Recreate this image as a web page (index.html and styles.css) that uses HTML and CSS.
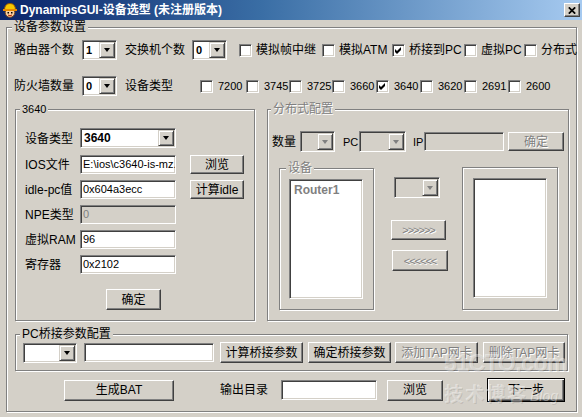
FILE: index.html
```html
<!DOCTYPE html>
<html lang="zh-CN">
<head>
<meta charset="utf-8">
<title>DynamipsGUI-设备选型</title>
<link rel="stylesheet" href="styles.css">
</head>
<body>
<div class="titlebar">
  <svg class="appicon" viewBox="0 0 16 16" width="16" height="16">
    <circle cx="8" cy="10.5" r="4.8" fill="#f7cfa0" stroke="#7a4a20" stroke-width="1"/>
    <path d="M2.5 8 Q2.5 1.5 8 1.5 Q13.5 1.5 13.5 8 Z" fill="#f7c600" stroke="#9a5a00" stroke-width="1"/>
    <rect x="1" y="7" width="14" height="2" fill="#e88a00"/>
    <rect x="5.5" y="10" width="1.5" height="1.5" fill="#000"/>
    <rect x="9" y="10" width="1.5" height="1.5" fill="#000"/>
    <path d="M6 13 Q8 14.5 10 13" stroke="#b02000" fill="none"/>
  </svg>
  <span class="title">DynamipsGUI-设备选型 (未注册版本)</span>
  <span class="close"><svg viewBox="0 0 8 7" width="8" height="7"><path d="M0.8 0.3 L7.2 6.7 M7.2 0.3 L0.8 6.7" stroke="#000" stroke-width="1.7"/></svg></span>
</div>

<fieldset class="grp main">
  <legend>设备参数设置</legend>

  <div class="row top1">
    <span class="lbl l-a">路由器个数</span>
    <span class="combo c-num"><span class="cv">1</span><span class="dd"></span></span>
    <span class="lbl l-b">交换机个数</span>
    <span class="combo c-num"><span class="cv">0</span><span class="dd"></span></span>
    <span class="chk k1"><span class="cb"></span>模拟帧中继</span>
    <span class="chk k2"><span class="cb"></span>模拟ATM</span>
    <span class="chk k3"><span class="cb"><svg viewBox="0 0 11 11" width="11" height="11"><path d="M2 4 L4 6 L8 2 L8 5 L4 9 L2 7 Z" fill="#000"/></svg></span>桥接到PC</span>
    <span class="chk k4"><span class="cb"></span>虚拟PC</span>
    <span class="chk k5"><span class="cb"></span>分布式</span>
  </div>

  <div class="row top2">
    <span class="lbl l-a">防火墙数量</span>
    <span class="combo c-num"><span class="cv">0</span><span class="dd"></span></span>
    <span class="lbl l-c">设备类型</span>
    <span class="chk t k6"><span class="cb"></span>7200</span>
    <span class="chk t k7"><span class="cb"></span>3745</span>
    <span class="chk t k7"><span class="cb"></span>3725</span>
    <span class="chk t k8"><span class="cb"></span>3660</span>
    <span class="chk t k8"><span class="cb"><svg viewBox="0 0 11 11" width="11" height="11"><path d="M2 4 L4 6 L8 2 L8 5 L4 9 L2 7 Z" fill="#000"/></svg></span>3640</span>
    <span class="chk t k8"><span class="cb"></span>3620</span>
    <span class="chk t k8"><span class="cb"></span>2691</span>
    <span class="chk t k8"><span class="cb"></span>2600</span>
  </div>

  <div class="mid">
    <fieldset class="grp g3640">
      <legend class="en">3640</legend>
      <div class="form">
        <span class="lbl">设备类型</span>
        <span class="combo c-type"><span class="cv">3640</span><span class="dd"></span></span>
        <span></span>
        <span class="lbl">IOS文件</span>
        <span class="edit">E:\ios\c3640-is-mz.</span>
        <button class="btn">浏览</button>
        <span class="lbl">idle-pc值</span>
        <span class="edit">0x604a3ecc</span>
        <button class="btn">计算idle</button>
        <span class="lbl">NPE类型</span>
        <span class="edit off">0</span>
        <span></span>
        <span class="lbl">虚拟RAM</span>
        <span class="edit">96</span>
        <span></span>
        <span class="lbl">寄存器</span>
        <span class="edit">0x2102</span>
        <span></span>
      </div>
      <button class="btn ok">确定</button>
    </fieldset>

    <fieldset class="grp gdist">
      <legend class="dis">分布式配置</legend>
      <div class="row drow1">
        <span class="lbl d-num">数量</span>
        <span class="combo off c-dn"><span class="cv"></span><span class="dd"></span></span>
        <span class="lbl en d-pc">PC</span>
        <span class="combo off c-dpc"><span class="cv"></span><span class="dd"></span></span>
        <span class="lbl en d-ip">IP</span>
        <span class="edit off d-ipin"></span>
        <button class="btn dis d-ok">确定</button>
      </div>
      <div class="row drow2">
        <fieldset class="grp gdev">
          <legend class="dis">设备</legend>
          <div class="list"><b>Router1</b></div>
        </fieldset>
        <div class="midcol">
          <span class="combo off c-mid"><span class="cv"></span><span class="dd"></span></span>
          <button class="btn dis arr1">&gt;&gt;&gt;&gt;&gt;&gt;</button>
          <button class="btn dis arr2">&lt;&lt;&lt;&lt;&lt;&lt;</button>
        </div>
        <div class="etch rbox">
          <div class="list"></div>
        </div>
      </div>
    </fieldset>
  </div>

  <fieldset class="grp gpc">
    <legend>PC桥接参数配置</legend>
    <div class="row pcrow">
      <span class="combo c-pc"><span class="cv"></span><span class="dd"></span></span>
      <span class="edit p-in"></span>
      <button class="btn p-b p-b1">计算桥接参数</button>
      <button class="btn p-b p-b2">确定桥接参数</button>
      <button class="btn dis p-b p-b3">添加TAP网卡</button>
      <button class="btn dis p-b p-b4">删除TAP网卡</button>
    </div>
  </fieldset>

  <div class="row bottom">
    <button class="btn b-bat">生成BAT</button>
    <span class="lbl b-lbl">输出目录</span>
    <span class="edit b-in"></span>
    <button class="btn b-br">浏览</button>
    <button class="btn def b-next">下一步</button>
  </div>
</fieldset>

<div class="wm" aria-hidden="true">
  <span class="wm1">51CTO.com</span>
  <span class="wm2">技术博客<i>Blog</i></span>
</div>
</body>
</html>
```

FILE: styles.css
```css
* { box-sizing: border-box; }
html, body { margin: 0; padding: 0; }
body {
  width: 582px;
  height: 417px;
  overflow: hidden;
  position: relative;
  background: #d4d0c8;
  color: #000;
  font: 12px/14px "Liberation Sans", "Noto Sans CJK SC", sans-serif;
}

/* title bar */
.titlebar {
  height: 20px;
  display: flex;
  align-items: center;
  padding: 0 2px 0 2px;
  background: linear-gradient(90deg, #0a246a 0%, #3a6ea5 45%, #a6caf0 100%);
}
.appicon { flex-shrink: 0; }
.title {
  flex: 1;
  margin-left: 2px;
  color: #fff;
  font-weight: bold;
  white-space: nowrap;
}
.close {
  width: 16px;
  height: 14px;
  display: flex;
  align-items: center;
  justify-content: center;
  background: #d4d0c8;
  border: 1px solid;
  border-color: #fff #404040 #404040 #fff;
  box-shadow: inset -1px -1px #808080;
}

/* group boxes */
.grp {
  margin: 0;
  padding: 0;
  min-width: 0;
  border: 1px solid #808080;
  box-shadow: inset 1px 1px #fff, 1px 1px #fff;
}
.grp > legend {
  padding: 0 2px;
  line-height: 14px;
  background: #d4d0c8;
}
.etch {
  border: 1px solid #808080;
  box-shadow: inset 1px 1px #fff, 1px 1px #fff;
}
.dis, legend.dis {
  color: #808080;
  text-shadow: 1px 1px 0 #fff;
}
.en { font-size: 11px; }

.main {
  margin: 0 5px 0 6px;
  width: 571px;
  padding: 6px 0 9px 7px;
}
.main > legend { margin-left: -2px; }

.row { display: flex; align-items: center; }
.row > * { flex-shrink: 0; }
.lbl { white-space: nowrap; }

/* combo */
.combo {
  display: flex;
  height: 20px;
  padding: 1px;
  background: #fff;
  border: 1px solid;
  border-color: #808080 #fff #fff #808080;
  box-shadow: inset 1px 1px #404040, inset -1px -1px #d4d0c8;
}
.combo .cv {
  flex: 1;
  padding-left: 2px;
  font-weight: bold;
  font-size: 11px;
  line-height: 16px;
  overflow: hidden;
}
.combo .dd {
  width: 16px;
  display: flex;
  align-items: center;
  justify-content: center;
  background: #d4d0c8;
  border: 1px solid;
  border-color: #d4d0c8 #404040 #404040 #d4d0c8;
  box-shadow: inset 1px 1px #fff, inset -1px -1px #808080;
}
.combo .dd::after {
  content: "";
  width: 0;
  height: 0;
  border-left: 3.5px solid transparent;
  border-right: 3.5px solid transparent;
  border-top: 4px solid #000;
}
.combo.off { background: #d4d0c8; }
.combo.off .dd::after { border-top-color: #808080; }

/* checkbox */
.chk { display: flex; align-items: center; gap: 4px; white-space: nowrap; }
.chk.t { gap: 5px; font-size: 11px; }
.cb {
  width: 13px;
  height: 13px;
  flex-shrink: 0;
  display: flex;
  background: #fff;
  border: 1px solid;
  border-color: #808080 #fff #fff #808080;
  box-shadow: inset 1px 1px #404040, inset -1px -1px #d4d0c8;
}

/* edit */
.edit {
  display: block;
  height: 19px;
  padding: 0 1px 0 2px;
  background: #fff;
  border: 1px solid;
  border-color: #808080 #fff #fff #808080;
  box-shadow: inset 1px 1px #404040, inset -1px -1px #d4d0c8;
  font-size: 11px;
  line-height: 17px;
  white-space: nowrap;
  overflow: hidden;
}
.edit.off { background: #d4d0c8; color: #808080; }

/* button */
.btn {
  margin: 0;
  padding: 0;
  height: 21px;
  display: flex;
  align-items: center;
  justify-content: center;
  font: inherit;
  color: #000;
  background: #d4d0c8;
  border: 1px solid;
  border-color: #fff #404040 #404040 #fff;
  box-shadow: inset -1px -1px #808080, inset 1px 1px #d4d0c8;
  white-space: nowrap;
}
.btn.dis { color: #808080; text-shadow: 1px 1px 0 #fff; }
.btn.def {
  border: 1px solid #000;
  box-shadow: inset 1px 1px #fff, inset -1px -1px #404040, inset -2px -2px #808080;
}

/* top rows */
.top1 { height: 20px; }
.top2 { height: 20px; margin-top: 16px; }
.l-a { width: 68px; }
.c-num { width: 35px; }
.l-b { margin-left: 8px; width: 67px; }
.l-c { margin-left: 8px; width: 75px; }
.k1 { margin-left: 12px; width: 83px; }
.k2 { width: 70px; }
.k3 { width: 72px; }
.k4 { width: 60px; }
.k5 { width: 53px; }
.k6 { width: 46px; }
.k7 { width: 43px; }
.k8 { width: 44px; }

/* middle section */
.mid { display: flex; gap: 12px; margin: 6px 0 0 1px; }

.g3640 { width: 240px; height: 219px; padding: 12px 0 0 9px; }
.g3640 > legend { margin-left: -5px; }
.form {
  display: grid;
  grid-template-columns: 55px 96px 68px;
  grid-template-rows: 21px repeat(5, 19px);
  row-gap: 6px;
  align-items: start;
}
.form .lbl { align-self: center; }
.form .btn { height: 19px; width: 54px; margin-left: 14px; }
.c-type { width: 96px; }
.c-type .cv { font-size: 12px; }
.ok { width: 55px; margin: 15px 0 0 81px; }

.gdist { width: 302px; height: 219px; padding: 15px 0 0 4px; }
.gdist > legend { margin-left: -1px; }
.drow1 { height: 21px; }
.d-num { width: 28px; }
.c-dn { width: 35px; height: 21px; }
.d-pc { margin-left: 8px; width: 16px; }
.c-dpc { width: 47px; height: 21px; }
.d-ip { margin-left: 7px; width: 11px; }
.d-ipin { width: 80px; }
.d-ok { margin-left: 4px; width: 56px; height: 19px; }

.drow2 { align-items: flex-start; margin: 9px 0 0 7px; }
.gdev { width: 95px; height: 149px; padding: 4px 0 0 9px; }
.gdev > legend { margin-left: -3px; }
.list {
  width: 74px;
  height: 120px;
  padding: 3px 4px;
  background: #fff;
  color: #808080;
  border: 1px solid;
  border-color: #808080 #fff #fff #808080;
  box-shadow: inset 1px 1px #404040, inset -1px -1px #d4d0c8;
}
.list b { font-size: 12px; }
.midcol { display: flex; flex-direction: column; width: 56px; margin-left: 17px; }
.c-mid { width: 46px; height: 21px; margin: 16px 0 0 3px; }
.arr1 { width: 55px; height: 20px; margin-top: 22px; font-size: 11px; letter-spacing: -1px; }
.arr2 { width: 56px; height: 21px; margin: 10px 0 0 1px; font-size: 11px; letter-spacing: -1px; }
.rbox { width: 96px; height: 143px; margin: 6px 0 0 15px; padding: 10px 0 0 10px; }

/* PC bridge */
.gpc { width: 553px; height: 44px; margin: 6px 0 0 1px; padding: 1px 0 0 7px; }
.gpc > legend { margin-left: -3px; }
.pcrow { height: 21px; }
.c-pc { width: 54px; }
.p-in { width: 130px; margin-left: 7px; }
.p-b { width: 83px; }
.p-b1 { margin-left: 6px; }
.p-b2 { margin-left: 5px; }
.p-b3 { margin-left: 4px; }
.p-b4 { margin-left: 5px; width: 82px; }

/* bottom row */
.bottom { height: 24px; margin-top: 7px; }
.b-bat { width: 110px; margin-left: 50px; }
.b-lbl { margin-left: 46px; width: 61px; }
.b-in { width: 96px; height: 20px; }
.b-br { width: 56px; margin-left: 10px; }
.b-next { width: 78px; height: 24px; margin-left: 44px; }

/* watermark overlay */
.wm {
  position: absolute;
  left: 444px;
  top: 350px;
  pointer-events: none;
  color: rgba(255, 255, 255, 0.4);
  text-shadow: 1px 1px 0 rgba(0, 0, 0, 0.1);
}
.wm1 {
  display: block;
  font: bold 23px/26px "Liberation Sans", sans-serif;
  letter-spacing: -0.5px;
}
.wm2 {
  display: block;
  margin-top: 6px;
  font: bold 19px/22px "Noto Sans CJK SC", sans-serif;
  letter-spacing: 2px;
}
.wm2 i { font: italic 14px/22px "Liberation Sans", sans-serif; letter-spacing: 0; margin-left: 2px; }
```
